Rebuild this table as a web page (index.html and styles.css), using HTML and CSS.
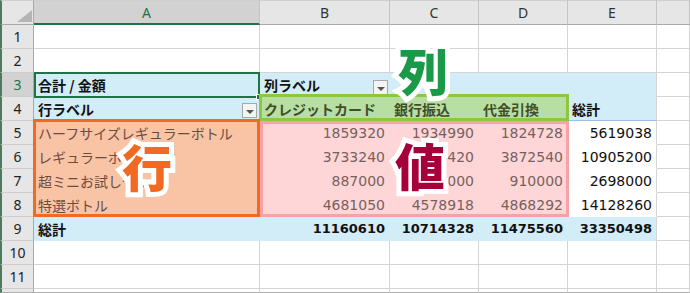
FILE: index.html
```html
<!DOCTYPE html>
<html lang="ja">
<head>
<meta charset="utf-8">
<title>ピボットテーブル</title>
<link rel="stylesheet" href="styles.css">
</head>
<body>
<div class="sheet">
  <div class="corner"><span class="tri"></span></div>
  <div class="ch sel">A</div><div class="ch">B</div><div class="ch">C</div><div class="ch">D</div><div class="ch">E</div><div class="ch"></div>

  <div class="rh">1</div><div class="c"></div><div class="c"></div><div class="c"></div><div class="c"></div><div class="c"></div><div class="c"></div>
  <div class="rh">2</div><div class="c"></div><div class="c"></div><div class="c"></div><div class="c"></div><div class="c"></div><div class="c"></div>

  <div class="rh sel">3</div>
  <div class="c pv b">合計 / 金額</div>
  <div class="c pv b split">列ラベル<span class="dd dd-b3"></span></div>
  <div class="c pv"></div><div class="c pv"></div><div class="c pv end"></div><div class="c"></div>

  <div class="rh">4</div>
  <div class="c pv b split">行ラベル<span class="dd dd-a4"></span></div>
  <div class="c gr">クレジットカード</div>
  <div class="c gr">銀行振込</div>
  <div class="c gr">代金引換</div>
  <div class="c pv b end line">総計</div>
  <div class="c"></div>

  <div class="rh">5</div>
  <div class="c or">ハーフサイズレギュラーボトル</div>
  <div class="c pk num">1859320</div><div class="c pk num">1934990</div><div class="c pk num">1824728</div>
  <div class="c wh num">5619038</div><div class="c"></div>

  <div class="rh">6</div>
  <div class="c or">レギュラーボトル</div>
  <div class="c pk num">3733240</div><div class="c pk num">3299420</div><div class="c pk num">3872540</div>
  <div class="c wh num">10905200</div><div class="c"></div>

  <div class="rh">7</div>
  <div class="c or">超ミニお試しセット</div>
  <div class="c pk num">887000</div><div class="c pk num">901000</div><div class="c pk num">910000</div>
  <div class="c wh num">2698000</div><div class="c"></div>

  <div class="rh">8</div>
  <div class="c or">特選ボトル</div>
  <div class="c pk num">4681050</div><div class="c pk num">4578918</div><div class="c pk num">4868292</div>
  <div class="c wh num line">14128260</div><div class="c"></div>

  <div class="rh">9</div>
  <div class="c pv b">総計</div>
  <div class="c pv bn">11160610</div><div class="c pv bn">10714328</div><div class="c pv bn">11475560</div>
  <div class="c pv bn end">33350498</div><div class="c"></div>

  <div class="rh">10</div><div class="c"></div><div class="c"></div><div class="c"></div><div class="c"></div><div class="c"></div><div class="c"></div>
  <div class="rh">11</div><div class="c"></div><div class="c"></div><div class="c"></div><div class="c"></div><div class="c"></div><div class="c"></div>
  <div class="rh last"></div><div class="c last"></div><div class="c last"></div><div class="c last"></div><div class="c last"></div><div class="c last"></div><div class="c last"></div>

  <div class="box box-sel"><span class="handle"></span></div>
  <div class="box box-lime"></div>
  <div class="box box-orange"></div>
  <div class="box box-pink"></div>

  <span class="big big-col">列</span>
  <span class="big big-row">行</span>
  <span class="big big-val">値</span>
</div>
</body>
</html>
```
FILE: styles.css
```css
* { box-sizing: border-box; }

body {
  margin: 0;
  background: #fff;
  font-family: "Noto Sans CJK JP", sans-serif;
}

.sheet {
  position: relative;
  display: grid;
  grid-template-columns: 34px 226px 130px 89px 89px 89px 33px;
  grid-template-rows: 25px repeat(11, 24px) 4px;
  width: 690px;
  height: 293px;
  overflow: hidden;
}

.sheet > div {
  min-width: 0;
  overflow: hidden;
  white-space: nowrap;
}

.corner {
  background: #e6e6e6;
  border-left: 2px solid #4e7b5f;
  border-top: 1px solid #cfcfcf;
  border-right: 1px solid #a9a9a9;
  border-bottom: 1px solid #a9a9a9;
  display: flex;
  align-items: flex-end;
  justify-content: flex-end;
  padding: 0 1px 2px 0;
}

.tri {
  width: 15px;
  height: 12px;
  background: #b5b5b5;
  clip-path: polygon(100% 0, 100% 100%, 0 100%);
}

.ch {
  background: #e6e6e6;
  border-top: 1px solid #cfcfcf;
  border-right: 1px solid #c4c4c4;
  border-bottom: 1px solid #a9a9a9;
  display: flex;
  align-items: center;
  justify-content: center;
  font: 14px "Noto Sans", sans-serif;
  color: #333;
}

.ch.sel {
  background: #d2d2d2;
  color: #217346;
  border-bottom: 2px solid #217346;
}

.rh {
  background: #e6e6e6;
  border-left: 2px solid #4e7b5f;
  border-right: 1px solid #a9a9a9;
  border-bottom: 1px solid #cdcdcd;
  display: flex;
  align-items: center;
  justify-content: center;
  font: 14px "Noto Sans", sans-serif;
  color: #222;
}

.rh.sel {
  background: #d2d2d2;
  color: #217346;
}

.c {
  border-right: 1px solid #d4d4d4;
  border-bottom: 1px solid #d4d4d4;
  display: flex;
  align-items: center;
  padding: 0 4px;
  font-size: 14px;
  color: #111;
}

.last { border-bottom-color: #b0b0b0; }

.pv {
  background: #d2ecf8;
  border-color: #d2ecf8;
}

.end { border-right-color: #d4d4d4; }
.line { border-bottom-color: #9bc2e6; }

.b { font-weight: 700; }

.split {
  justify-content: space-between;
  padding-right: 1px;
}

.dd {
  align-self: flex-end;
  width: 15px;
  height: 15px;
  margin-bottom: 1px;
  background: #f4f4f4;
  border: 1px solid #a8a8a8;
  position: relative;
}

.dd::after {
  content: "";
  position: absolute;
  left: 3px;
  top: 6px;
  border-left: 4px solid transparent;
  border-right: 4px solid transparent;
  border-top: 4px solid #555;
}

.dd-a4 { margin-right: 1px; margin-bottom: 2px; }

.gr {
  background: #b7dfa4;
  border-color: #b7dfa4;
  color: #414e26;
  font-weight: 700;
}

.or {
  background: #f9c3a6;
  border-color: #f9c3a6;
  color: #6e4c3c;
}

.pk {
  background: #ffd6d7;
  border-color: #ffd6d7;
  color: #76615f;
}

.wh {
  background: #fff;
  border-bottom-color: #fff;
}

.num {
  justify-content: flex-end;
  font-family: "DejaVu Sans", sans-serif;
}

.bn {
  justify-content: flex-end;
  font-family: "DejaVu Sans", sans-serif;
  font-size: 13px;
  font-weight: 700;
}

/* highlight frames drawn over the cells, anchored to grid areas */
.sheet > .box {
  position: absolute;
  pointer-events: none;
  overflow: visible;
}

.box-sel {
  grid-column: 2 / 3;
  grid-row: 4 / 5;
  top: -1px;
  bottom: -1px;
  left: 0;
  right: 0;
  border: 2px solid #217346;
}

.handle {
  position: absolute;
  right: -4px;
  bottom: -4px;
  width: 6px;
  height: 6px;
  background: #217346;
  border: 1px solid #fff;
}

.box-lime {
  grid-column: 3 / 6;
  grid-row: 5 / 6;
  top: -3px;
  left: -1px;
  right: -1px;
  bottom: 0;
  border: 3px solid #8dc63f;
}

.box-orange {
  grid-column: 2 / 3;
  grid-row: 6 / 10;
  top: -2px;
  left: -1px;
  right: 0;
  bottom: 0;
  border: 3px solid #f26a22;
}

.box-pink {
  grid-column: 3 / 6;
  grid-row: 6 / 10;
  top: 0;
  left: 0;
  right: -1px;
  bottom: 0;
  border: 3px solid #f7a2a6;
}

.big {
  position: absolute;
  font-family: "Noto Sans CJK JP", sans-serif;
  font-weight: 900;
  font-size: 50px;
  line-height: 1;
  -webkit-text-stroke: 10px #fff;
  paint-order: stroke fill;
}

.big-col { left: 398px; top: 44px; color: #1a9a48; }
.big-row { left: 122px; top: 140px; color: #f26a22; }
.big-val { left: 395px; top: 139px; color: #a5003a; }
```
